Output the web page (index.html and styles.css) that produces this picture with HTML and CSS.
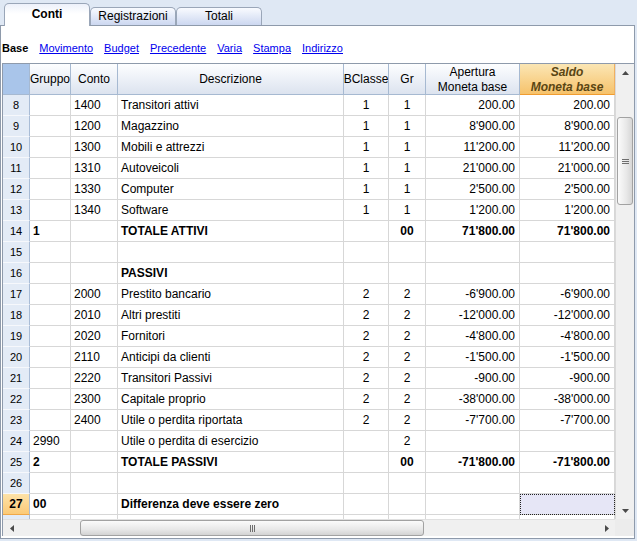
FILE: index.html
```html
<!DOCTYPE html>
<html lang="it">

<head>
	<meta charset="UTF-8">
	<title>Conti</title>
	<link rel="stylesheet" href="styles.css">
</head>

<body>
	<div class="tabbar">
		<div class="tab active">Conti</div>
		<div class="tab">Registrazioni</div>
		<div class="tab">Totali</div>
	</div>

	<div class="panel">
		<div class="linkbar">
			<span class="view-current">Base</span>
			<a href="#">Movimento</a>
			<a href="#">Budget</a>
			<a href="#">Precedente</a>
			<a href="#">Varia</a>
			<a href="#">Stampa</a>
			<a href="#">Indirizzo</a>
		</div>

		<div class="grid">
			<div class="grid-body">
				<div class="sheet">
					<div class="row head">
						<div class="cell corner"></div>
						<div class="cell">Gruppo</div>
						<div class="cell">Conto</div>
						<div class="cell">Descrizione</div>
						<div class="cell">BClasse</div>
						<div class="cell">Gr</div>
						<div class="cell">Apertura<br>Moneta base</div>
						<div class="cell saldo">Saldo<br>Moneta base</div>
					</div>

					<div class="row">
						<div class="cell rn">8</div><div class="cell"></div><div class="cell">1400</div><div class="cell">Transitori attivi</div>
						<div class="cell ctr">1</div><div class="cell ctr">1</div><div class="cell amt">200.00</div><div class="cell amt">200.00</div>
					</div>
					<div class="row">
						<div class="cell rn">9</div><div class="cell"></div><div class="cell">1200</div><div class="cell">Magazzino</div>
						<div class="cell ctr">1</div><div class="cell ctr">1</div><div class="cell amt">8'900.00</div><div class="cell amt">8'900.00</div>
					</div>
					<div class="row">
						<div class="cell rn">10</div><div class="cell"></div><div class="cell">1300</div><div class="cell">Mobili e attrezzi</div>
						<div class="cell ctr">1</div><div class="cell ctr">1</div><div class="cell amt">11'200.00</div><div class="cell amt">11'200.00</div>
					</div>
					<div class="row">
						<div class="cell rn">11</div><div class="cell"></div><div class="cell">1310</div><div class="cell">Autoveicoli</div>
						<div class="cell ctr">1</div><div class="cell ctr">1</div><div class="cell amt">21'000.00</div><div class="cell amt">21'000.00</div>
					</div>
					<div class="row">
						<div class="cell rn">12</div><div class="cell"></div><div class="cell">1330</div><div class="cell">Computer</div>
						<div class="cell ctr">1</div><div class="cell ctr">1</div><div class="cell amt">2'500.00</div><div class="cell amt">2'500.00</div>
					</div>
					<div class="row">
						<div class="cell rn">13</div><div class="cell"></div><div class="cell">1340</div><div class="cell">Software</div>
						<div class="cell ctr">1</div><div class="cell ctr">1</div><div class="cell amt">1'200.00</div><div class="cell amt">1'200.00</div>
					</div>
					<div class="row total">
						<div class="cell rn">14</div><div class="cell">1</div><div class="cell"></div><div class="cell">TOTALE ATTIVI</div>
						<div class="cell ctr"></div><div class="cell ctr">00</div><div class="cell amt">71'800.00</div><div class="cell amt">71'800.00</div>
					</div>
					<div class="row">
						<div class="cell rn">15</div><div class="cell"></div><div class="cell"></div><div class="cell"></div>
						<div class="cell"></div><div class="cell"></div><div class="cell"></div><div class="cell"></div>
					</div>
					<div class="row total">
						<div class="cell rn">16</div><div class="cell"></div><div class="cell"></div><div class="cell">PASSIVI</div>
						<div class="cell"></div><div class="cell"></div><div class="cell"></div><div class="cell"></div>
					</div>
					<div class="row">
						<div class="cell rn">17</div><div class="cell"></div><div class="cell">2000</div><div class="cell">Prestito bancario</div>
						<div class="cell ctr">2</div><div class="cell ctr">2</div><div class="cell amt">-6'900.00</div><div class="cell amt">-6'900.00</div>
					</div>
					<div class="row">
						<div class="cell rn">18</div><div class="cell"></div><div class="cell">2010</div><div class="cell">Altri prestiti</div>
						<div class="cell ctr">2</div><div class="cell ctr">2</div><div class="cell amt">-12'000.00</div><div class="cell amt">-12'000.00</div>
					</div>
					<div class="row">
						<div class="cell rn">19</div><div class="cell"></div><div class="cell">2020</div><div class="cell">Fornitori</div>
						<div class="cell ctr">2</div><div class="cell ctr">2</div><div class="cell amt">-4'800.00</div><div class="cell amt">-4'800.00</div>
					</div>
					<div class="row">
						<div class="cell rn">20</div><div class="cell"></div><div class="cell">2110</div><div class="cell">Anticipi da clienti</div>
						<div class="cell ctr">2</div><div class="cell ctr">2</div><div class="cell amt">-1'500.00</div><div class="cell amt">-1'500.00</div>
					</div>
					<div class="row">
						<div class="cell rn">21</div><div class="cell"></div><div class="cell">2220</div><div class="cell">Transitori Passivi</div>
						<div class="cell ctr">2</div><div class="cell ctr">2</div><div class="cell amt">-900.00</div><div class="cell amt">-900.00</div>
					</div>
					<div class="row">
						<div class="cell rn">22</div><div class="cell"></div><div class="cell">2300</div><div class="cell">Capitale proprio</div>
						<div class="cell ctr">2</div><div class="cell ctr">2</div><div class="cell amt">-38'000.00</div><div class="cell amt">-38'000.00</div>
					</div>
					<div class="row">
						<div class="cell rn">23</div><div class="cell"></div><div class="cell">2400</div><div class="cell">Utile o perdita riportata</div>
						<div class="cell ctr">2</div><div class="cell ctr">2</div><div class="cell amt">-7'700.00</div><div class="cell amt">-7'700.00</div>
					</div>
					<div class="row">
						<div class="cell rn">24</div><div class="cell">2990</div><div class="cell"></div><div class="cell">Utile o perdita di esercizio</div>
						<div class="cell ctr"></div><div class="cell ctr">2</div><div class="cell amt"></div><div class="cell amt"></div>
					</div>
					<div class="row total">
						<div class="cell rn">25</div><div class="cell">2</div><div class="cell"></div><div class="cell">TOTALE PASSIVI</div>
						<div class="cell ctr"></div><div class="cell ctr">00</div><div class="cell amt">-71'800.00</div><div class="cell amt">-71'800.00</div>
					</div>
					<div class="row">
						<div class="cell rn">26</div><div class="cell"></div><div class="cell"></div><div class="cell"></div>
						<div class="cell"></div><div class="cell"></div><div class="cell"></div><div class="cell"></div>
					</div>
					<div class="row total">
						<div class="cell rn cur">27</div><div class="cell">00</div><div class="cell"></div><div class="cell">Differenza deve essere zero</div>
						<div class="cell"></div><div class="cell"></div><div class="cell"></div><div class="cell sel"></div>
					</div>
					<div class="row">
						<div class="cell rn"></div><div class="cell"></div><div class="cell"></div><div class="cell"></div>
						<div class="cell"></div><div class="cell"></div><div class="cell"></div><div class="cell"></div>
					</div>
				</div>

				<div class="vscroll">
					<div class="sbtn">
						<svg width="7" height="4" viewBox="0 0 7 4"><polygon points="0,4 3.5,0 7,4" fill="#4a4a4a" /></svg>
					</div>
					<div class="vtrack">
						<div class="vthumb">
							<svg width="7" height="5" viewBox="0 0 7 5">
								<path d="M0 0.5H7M0 2.5H7M0 4.5H7" stroke="#6e6e6e" stroke-width="1" />
							</svg>
						</div>
					</div>
					<div class="sbtn">
						<svg width="7" height="4" viewBox="0 0 7 4"><polygon points="0,0 7,0 3.5,4" fill="#4a4a4a" /></svg>
					</div>
				</div>
			</div>

			<div class="grid-foot">
				<div class="hscroll">
					<div class="sbtn hbtn">
						<svg width="4" height="7" viewBox="0 0 4 7"><polygon points="4,0 4,7 0,3.5" fill="#4a4a4a" /></svg>
					</div>
					<div class="htrack">
						<div class="hthumb">
							<svg width="5" height="7" viewBox="0 0 5 7">
								<path d="M0.5 0V7M2.5 0V7M4.5 0V7" stroke="#6e6e6e" stroke-width="1" />
							</svg>
						</div>
					</div>
					<div class="sbtn hbtn">
						<svg width="4" height="7" viewBox="0 0 4 7"><polygon points="0,0 4,3.5 0,7" fill="#4a4a4a" /></svg>
					</div>
				</div>
				<div class="scroll-corner"></div>
			</div>
		</div>
	</div>
</body>

</html>
```

FILE: styles.css
```css
* {
	margin: 0;
	padding: 0;
	box-sizing: border-box;
}

body {
	font-family: 'Liberation Sans', Arial, sans-serif;
	font-size: 12px;
	color: #000;
	background: #dfe8f4;
	width: 637px;
	height: 541px;
	overflow: hidden;
}

/* Tabs */
.tabbar {
	width: 635px;
	height: 26px;
	display: flex;
	align-items: flex-end;
	padding-left: 4px;
	border-bottom: 1px solid #8e9aab;
}

.tab {
	width: 86px;
	height: 18px;
	border: 1px solid #9aa6b8;
	border-bottom: none;
	border-radius: 5px 5px 0 0;
	background: linear-gradient(#f9fbff, #ccd7f0);
	text-align: center;
	line-height: 17px;
}

.tab.active {
	position: relative;
	height: 23px;
	margin-bottom: -1px;
	background: linear-gradient(#edf1fa, #ffffff 45%);
	font-weight: bold;
	line-height: 21px;
}

/* Panel */
.panel {
	width: 635px;
	height: 513px;
	background: #fff;
	border: 1px solid #8e9aab;
	border-top: none;
}

.linkbar {
	height: 37px;
	padding: 15px 0 0 1px;
	display: flex;
	gap: 11px;
	font-size: 11px;
	line-height: 14px;
}

.linkbar a {
	color: #0000ee;
	text-decoration: underline;
}

.view-current {
	font-weight: bold;
}

/* Grid */
.grid {
	margin-left: 1px;
	border-top: 1px solid #8e9aab;
	border-left: 1px solid #8e9aab;
}

.grid-body {
	display: flex;
	height: 455px;
}

.sheet {
	width: 612px;
	overflow: hidden;
}

.row {
	display: grid;
	grid-template-columns: 27px 41px 47px 226px 45px 37px 94px 95px;
	height: 21px;
}

.cell {
	border-right: 1px solid #d7d7d7;
	border-bottom: 1px solid #d7d7d7;
	padding: 0 3px;
	line-height: 21px;
	white-space: nowrap;
	overflow: hidden;
}

.head {
	height: 31px;
}

.head .cell {
	display: flex;
	align-items: center;
	justify-content: center;
	text-align: center;
	line-height: 15px;
	padding: 1px 0 0;
	background: linear-gradient(#fdfeff, #dce3ef);
	border-color: #a6b9d1;
}

.head .corner {
	background: #a9c5ea;
}

.head .saldo {
	background: linear-gradient(#fbe6b4, #f6c26b);
	border-bottom: 1px solid #f09c30;
	border-right-color: #f0b060;
	font-style: italic;
	font-weight: bold;
	color: #5a4614;
}

.rn {
	background: #e3ebf6;
	border-right-color: #a9bcd6;
	border-bottom-color: #f6f8fc;
	text-align: center;
	font-size: 11px;
	padding: 0;
}

.rn.cur {
	background: linear-gradient(#fde2a8, #fbca78);
	border-bottom-color: #f0a848;
	font-weight: bold;
	font-size: 12px;
}

.total .cell {
	font-weight: bold;
}

.total .rn {
	font-weight: normal;
}

.total .rn.cur {
	font-weight: bold;
}

.ctr {
	text-align: center;
}

.amt {
	text-align: right;
	padding-right: 4px;
}

.sel {
	background: #e6e6f6;
	outline: 1px dotted #222;
	outline-offset: -1px;
}

/* Scrollbars */
.sbtn {
	height: 17px;
	display: flex;
	align-items: center;
	justify-content: center;
	flex-shrink: 0;
}

.vscroll {
	width: 19px;
	display: flex;
	flex-direction: column;
	background: #f0f0f0;
	border-left: 1px solid #d9d9d9;
}

.vtrack {
	flex: 1;
	padding-top: 36px;
}

.vthumb {
	height: 88px;
	margin: 0 1px;
	border: 1px solid #a2a2a2;
	border-radius: 3px;
	background: linear-gradient(90deg, #fbfbfb, #e8e8e8 60%, #d6d6d6);
	display: flex;
	align-items: center;
	justify-content: center;
}

.grid-foot {
	display: flex;
	height: 17px;
}

.hscroll {
	width: 612px;
	display: flex;
	background: #f0f0f0;
	border-top: 1px solid #e0e0e0;
}

.hbtn {
	width: 17px;
	height: auto;
}

.htrack {
	flex: 1;
	padding-left: 60px;
	display: flex;
	align-items: stretch;
}

.hthumb {
	width: 344px;
	border: 1px solid #a2a2a2;
	border-radius: 3px;
	background: linear-gradient(#fbfbfb, #e8e8e8 60%, #d3d3d3);
	display: flex;
	align-items: center;
	justify-content: center;
}

.scroll-corner {
	flex: 1;
	background: #ececec;
}
```
